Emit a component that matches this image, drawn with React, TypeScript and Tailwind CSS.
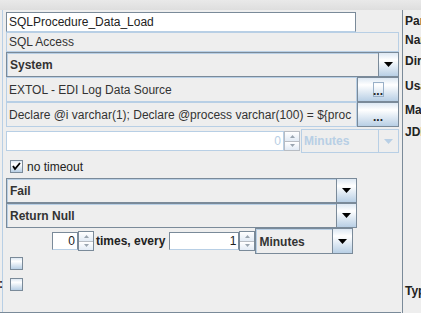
import React from "react";

const grad =
  "bg-[linear-gradient(to_bottom,#dde8f3_0%,#ffffff_30%,#b8cfe5_100%)]";

const Arrow = ({ disabled }: { disabled?: boolean }) => (
  <svg width="9" height="5" viewBox="0 0 9 5">
    <polygon points="0,0 9,0 4.5,5" fill={disabled ? "#b8cfe5" : "#000"} />
  </svg>
);

const ArrowButton = ({ disabled }: { disabled?: boolean }) => (
  <div
    className={`w-[20px] h-full flex items-center justify-center border-l border-[#7a8a99] ${
      disabled ? "bg-[#eeeeee] border-[#b8cfe5]" : grad
    }`}
  >
    <Arrow disabled={disabled} />
  </div>
);

const Combo = ({
  text,
  width,
  height,
  disabled,
}: {
  text: string;
  width: string;
  height: string;
  disabled?: boolean;
}) => (
  <div
    className={`${width} ${height} flex border ${
      disabled ? "border-[#b8cfe5]" : "border-[#7a8a99]"
    } bg-[#eeeeee]`}
  >
    <div
      className={`flex-1 flex items-center pl-[2px] font-bold ${
        disabled
          ? "text-[#b8cfe5]"
          : "text-[#333333] border-l border-t border-[#b8cfe5]"
      }`}
    >
      {text}
    </div>
    <ArrowButton disabled={disabled} />
  </div>
);

const Dots = ({ focused }: { focused?: boolean }) => (
  <div
    className={`w-[42px] h-full flex items-center justify-center border border-[#7a8a99] ${grad}`}
  >
    <div
      className={`flex items-end justify-center w-[11px] h-[15px] pb-[3px] ${
        focused ? "border border-[#99b0c8]" : ""
      }`}
    >
      <span className="block text-[12px] leading-[3px] font-bold text-[#222]">
        ...
      </span>
    </div>
  </div>
);

const SpinBtns = ({ disabled }: { disabled?: boolean }) => (
  <div
    className={`w-[16px] h-[20px] flex flex-col border ${
      disabled ? "border-[#b8bdc4]" : "border-[#7a8a99]"
    }`}
  >
    <div className="flex-1 flex items-center justify-center bg-[linear-gradient(to_bottom,#ffffff,#e2ebf5)] border-b border-[#b8bdc4]">
      <svg width="5" height="3" viewBox="0 0 5 3">
        <polygon points="2.5,0 5,3 0,3" fill="#9aa5b0" />
      </svg>
    </div>
    <div className="flex-1 flex items-center justify-center bg-[linear-gradient(to_bottom,#ffffff,#e2ebf5)]">
      <svg width="5" height="3" viewBox="0 0 5 3">
        <polygon points="0,0 5,0 2.5,3" fill="#9aa5b0" />
      </svg>
    </div>
  </div>
);

const Check = ({ checked }: { checked?: boolean }) => (
  <div
    className={`w-[13px] h-[13px] border border-[#7a8a99] flex items-center justify-center ${grad}`}
  >
    {checked && (
      <svg width="9" height="9" viewBox="0 0 9 9">
        <path d="M1 4 L3 7 L8 1" stroke="#000" strokeWidth="1.8" fill="none" />
      </svg>
    )}
  </div>
);

export default function App() {
  return (
    <div
      className="w-[421px] h-[313px] overflow-hidden bg-[#eeeeee] text-[12px] text-[#333333] leading-none"
      style={{ fontFamily: '"Liberation Sans", Arial, sans-serif' }}
    >
      <div className="h-[10px] bg-[linear-gradient(to_bottom,#e9e9e9,#dedede)]" />
      <div className="flex h-[303px]">
        {/* left form */}
        <div className="w-[401px] flex flex-col border-b border-[#7a8a99] relative">
          <div className="absolute left-[2px] top-0 bottom-0 w-px bg-[#b8cfe5]" />
          <div className="pl-[6px] flex flex-col">
            <div className="mt-[2px] w-[350px] h-[20px] bg-white border border-[#7a8a99] border-b-[#b8cfe5] flex items-center pl-[2px] text-[#222]">
              SQLProcedure_Data_Load
            </div>
            <div className="w-[393px] h-[20px] border border-[#b8cfe5] flex items-center pl-[2px]">
              SQL Access
            </div>
            <Combo text="System" width="w-[393px]" height="h-[25px]" />
            <div className="flex h-[25px] w-[393px]">
              <div className="w-[351px] h-full border border-[#b8cfe5] flex items-center pl-[2px]">
                EXTOL - EDI Log Data Source
              </div>
              <Dots focused />
            </div>
            <div className="flex h-[25px] w-[393px]">
              <div className="w-[351px] h-full border border-[#b8cfe5] flex items-center pl-[2px] whitespace-nowrap overflow-hidden">
                {"Declare @i varchar(1); Declare @process varchar(100) = ${proc"}
              </div>
              <Dots />
            </div>
            <div className="mt-[2px] flex items-center h-[24px] w-[393px]">
              <div className="w-[279px] h-[20px] bg-white border border-[#b8cfe5] flex items-center justify-end pr-[2px] text-[#b8cfe5]">
                0
              </div>
              <SpinBtns disabled />
              <div className="ml-[1px]">
                <Combo text="Minutes" width="w-[98px]" height="h-[24px]" disabled />
              </div>
            </div>
            <div className="mt-[7px] flex items-center gap-[4px] pl-[4px] h-[13px]">
              <Check checked />
              <span className="text-[#222]">no timeout</span>
            </div>
            <div className="mt-[5px]">
              <Combo text="Fail" width="w-[351px]" height="h-[25px]" />
            </div>
            <Combo text="Return Null" width="w-[351px]" height="h-[25px]" />
            <div className="mt-[1px] flex items-center h-[24px] pl-[46px]">
              <div className="w-[26px] h-[18px] bg-white border border-[#7a8a99] border-b-[#b8cfe5] flex items-center justify-end pr-[2px] text-[#222]">
                0
              </div>
              <SpinBtns />
              <span className="ml-[2px] mr-[4px] font-bold text-[#222]">
                times, every
              </span>
              <div className="w-[70px] h-[18px] bg-white border border-[#7a8a99] border-b-[#b8cfe5] flex items-center justify-end pr-[2px] text-[#222]">
                1
              </div>
              <SpinBtns />
              <div>
                <Combo text="Minutes" width="w-[98px]" height="h-[26px]" />
              </div>
            </div>
            <div className="mt-[4px] pl-[4px]">
              <Check />
            </div>
            <div className="mt-[8px] pl-[4px] relative">
              <span className="absolute left-[-7px] top-[0px] font-bold text-[#222]">
                :
              </span>
              <Check />
            </div>
          </div>
        </div>
        {/* right labels */}
        <div className="w-px bg-[#7a8a99] ml-[1px]" />
        <div className="flex-1 relative overflow-hidden font-bold text-[#222] whitespace-nowrap pl-[2px]">
          <div className="absolute left-[2px] top-[5px]">Para</div>
          <div className="absolute left-[2px] top-[24px]">Name</div>
          <div className="absolute left-[2px] top-[45px]">Direc</div>
          <div className="absolute left-[2px] top-[70px]">Usag</div>
          <div className="absolute left-[2px] top-[94px]">Map</div>
          <div className="absolute left-[2px] top-[116px]">JDE</div>
          <div className="absolute left-[2px] top-[275px]">Type</div>
        </div>
      </div>
    </div>
  );
}
